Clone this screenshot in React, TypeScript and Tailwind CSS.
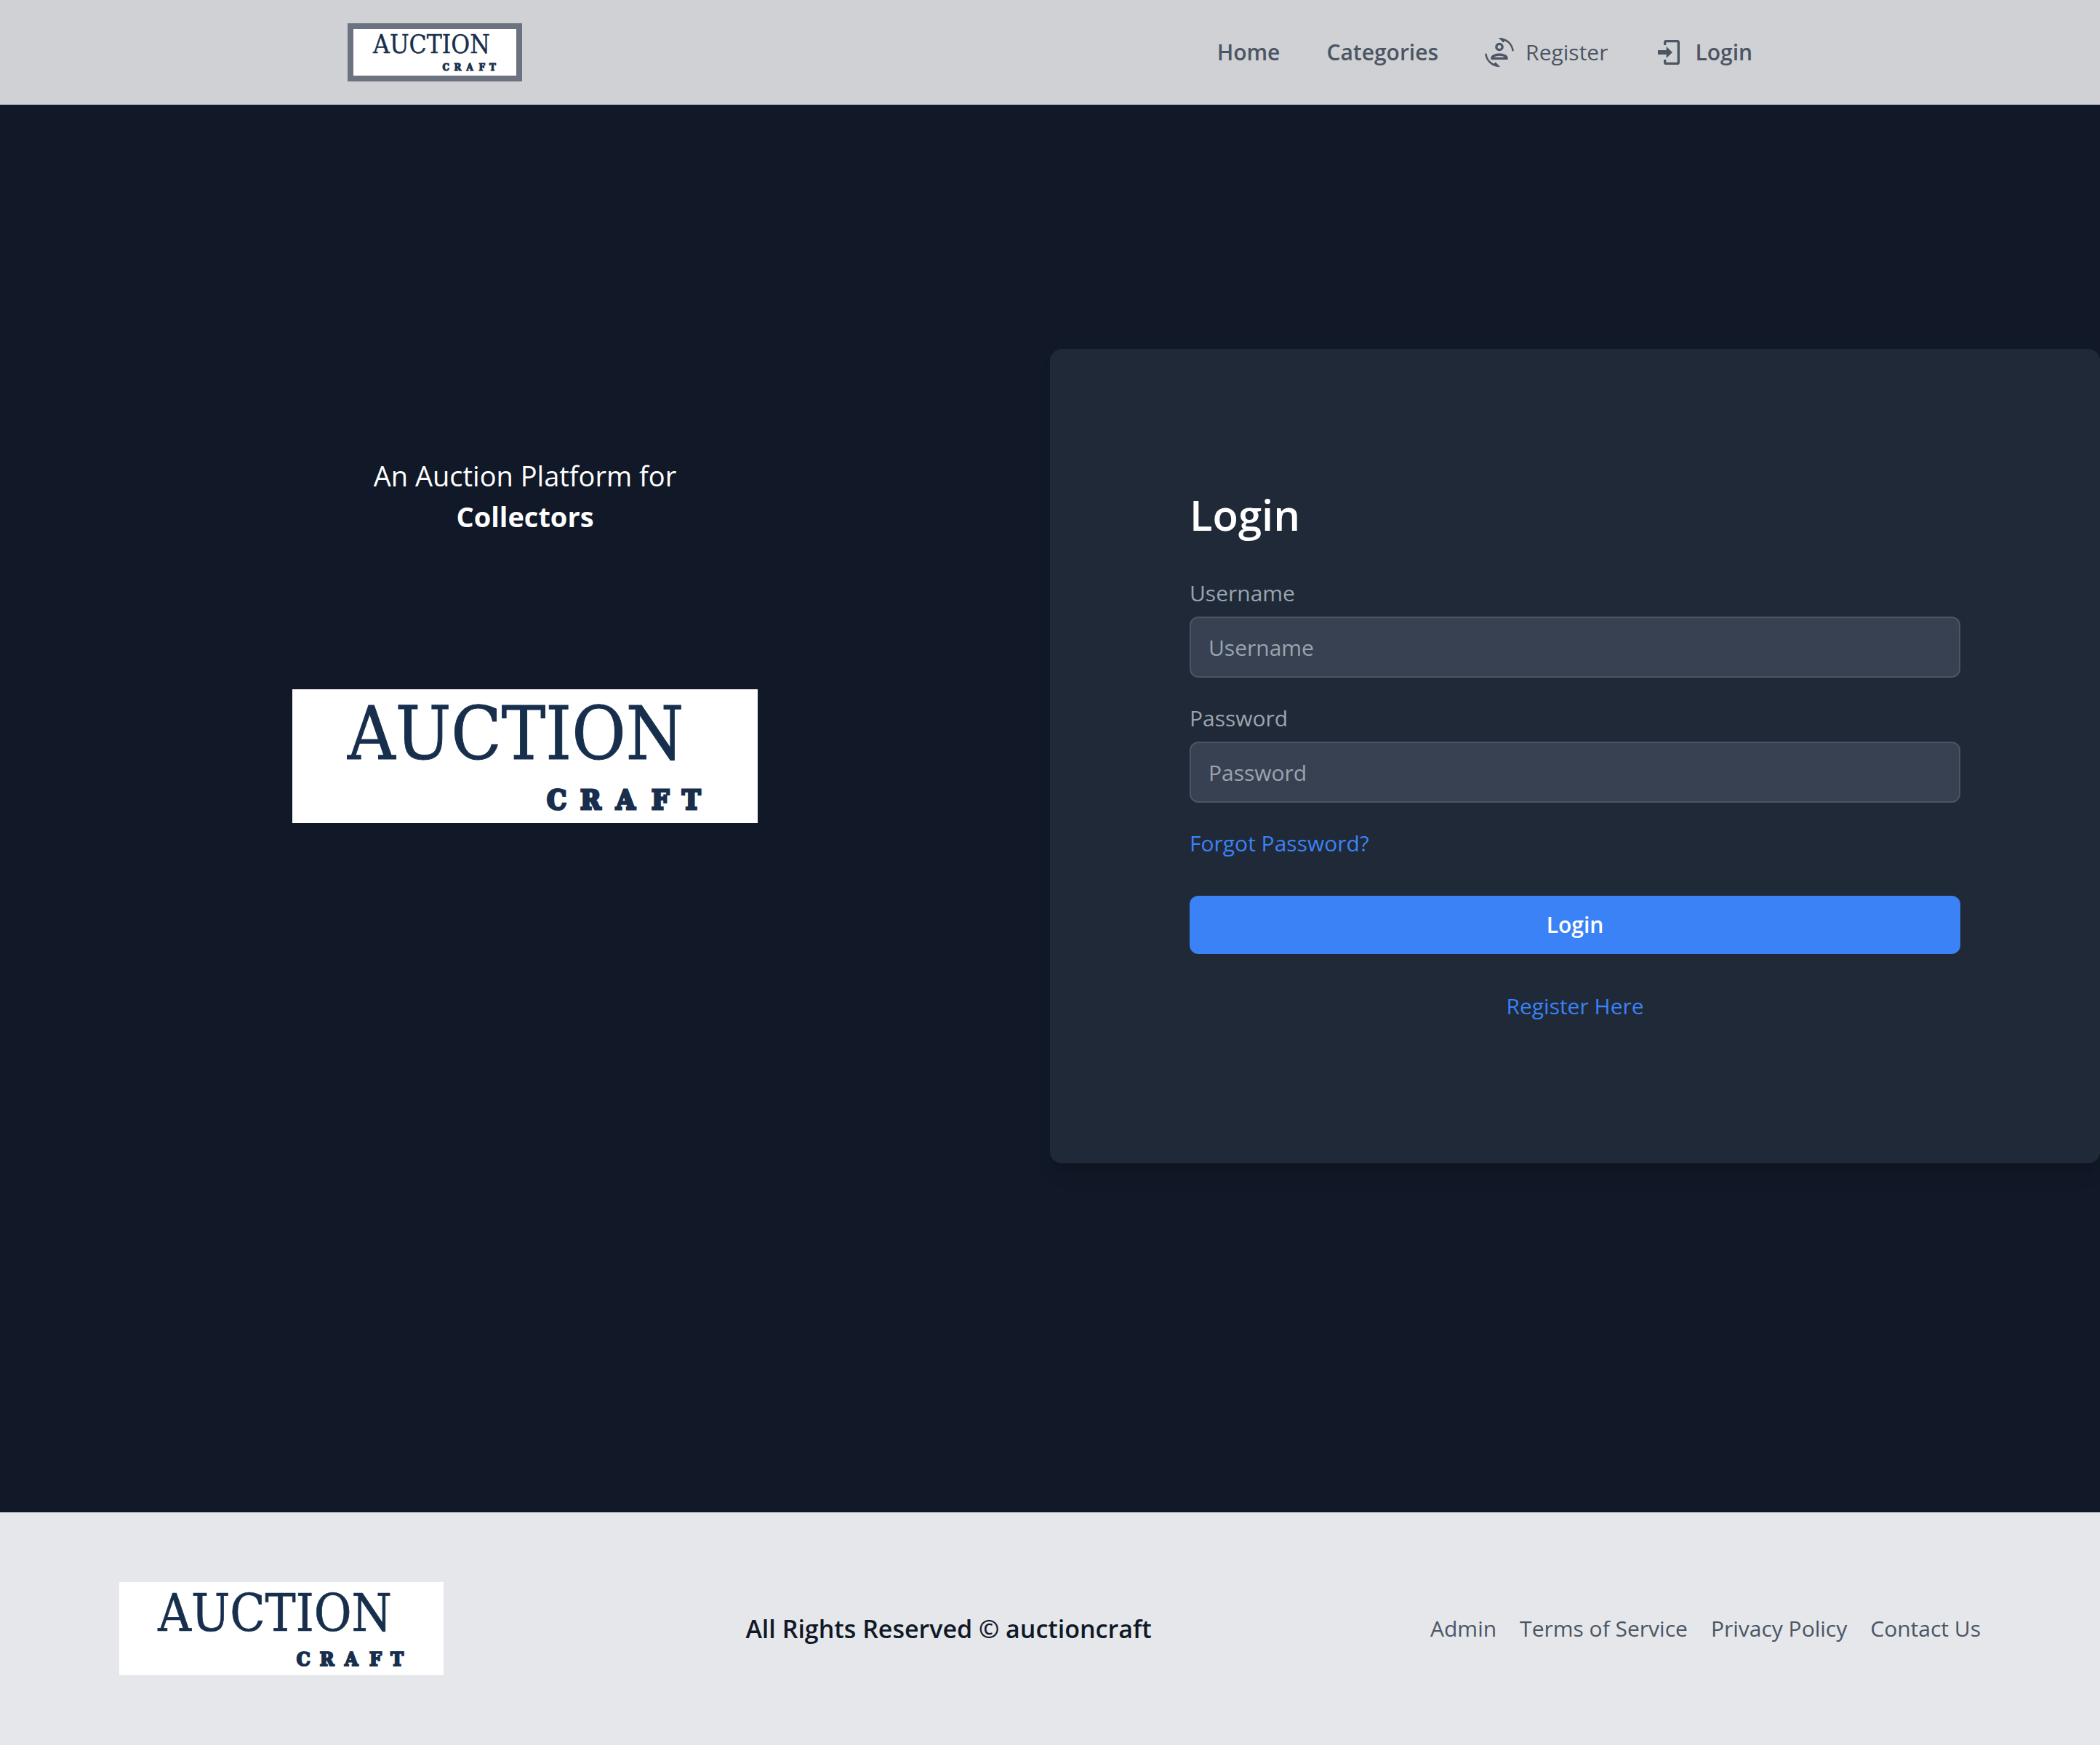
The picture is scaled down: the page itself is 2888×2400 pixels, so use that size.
import type { ReactNode } from "react";

function Logo({ className }: { className: string }) {
  return (
    <svg viewBox="0 0 640 184" role="img" aria-label="Auction Craft" className={className}>
      <rect width="640" height="184" fill="#ffffff" />
      <text
        x="76"
        y="96"
        fontSize="101"
        fill="#172f4d"
        stroke="#172f4d"
        strokeWidth="1"
        fontFamily="'DejaVu Serif Condensed', 'DejaVu Serif', serif"
      >
        AUCTION
      </text>
      <text
        x="350 396 445 494 536"
        y="165"
        fontSize="38"
        fontWeight="700"
        fill="#172f4d"
        stroke="#172f4d"
        strokeWidth="3"
        fontFamily="'DejaVu Serif Condensed', 'DejaVu Serif', serif"
      >
        CRAFT
      </text>
    </svg>
  );
}

function RegisterIcon() {
  return (
    <svg viewBox="0 0 24 24" fill="currentColor" aria-hidden="true" className="size-10">
      <path d="M7.52 21.48A10.49 10.49 0 0 1 1.55 13H.05C.56 19.16 5.71 24 12 24l.66-.03-3.81-3.81zM16.48 2.52A10.49 10.49 0 0 1 22.45 11h1.5C23.44 4.84 18.29 0 12 0l-.66.03 3.81 3.81z" />
      <circle cx="12" cy="7.5" r="2.5" fill="none" stroke="currentColor" strokeWidth="2" />
      <path
        fillRule="evenodd"
        d="M19 18H5v-1.5c0-2.5 4.2-3.6 7-3.6s7 1.1 7 3.6zM7.5 16h9c-.8-.7-2.9-1.2-4.5-1.2s-3.7.5-4.5 1.200z"
      />
    </svg>
  );
}

function LoginIcon() {
  return (
    <svg viewBox="0 0 24 24" fill="currentColor" aria-hidden="true" className="size-10">
      <path d="M3 10.2h7V7.2l5 4.8-5 4.800v-3H3z" />
      <path
        d="M8.8 6V3.8a1 1 0 0 1 1-1h9.2a1 1 0 0 1 1 1v16.400a1 1 0 0 1-1 1H9.8a1 1 0 0 1-1-1V18"
        fill="none"
        stroke="currentColor"
        strokeWidth="2"
      />
    </svg>
  );
}

function Field({ id, label, type }: { id: string; label: string; type: string }) {
  return (
    <div className="mb-8">
      <label htmlFor={id} className="mb-2 block text-[#9ca3af]">
        {label}
      </label>
      <input
        id={id}
        type={type}
        placeholder={label}
        className="block h-[84px] w-full rounded-xl border-2 border-[#4b5563] bg-[#374151] px-6 text-white placeholder:text-[#9ca3af]"
      />
    </div>
  );
}

function NavLink({ children, bold = true }: { children: ReactNode; bold?: boolean }) {
  return (
    <a href="#" className={bold ? "flex items-center gap-4 font-semibold" : "flex items-center gap-4"}>
      {children}
    </a>
  );
}

export default function App() {
  return (
    <div className="flex min-h-screen flex-col bg-[#111827] font-['Open_Sans','Noto_Sans',sans-serif] text-[30px] leading-[48px]">
      <header className="flex items-center justify-around bg-[#d0d1d5] py-8">
        <a href="#" className="border-8 border-[#6b7280]">
          <Logo className="block h-16 w-56 bg-white" />
        </a>
        <nav className="flex items-center gap-16 text-[#4b5563]">
          <NavLink>Home</NavLink>
          <NavLink>Categories</NavLink>
          <NavLink bold={false}>
            <RegisterIcon />
            Register
          </NavLink>
          <NavLink>
            <LoginIcon />
            Login
          </NavLink>
        </nav>
      </header>

      <main className="grid flex-1 grid-cols-2 items-center pb-36">
        <section className="grid grid-rows-[1fr_auto_1fr] justify-items-center self-stretch">
          <p className="mb-[210px] self-end text-center text-[38px] leading-[56px] text-white">
            An Auction Platform for
            <br />
            <strong className="font-bold">Collectors</strong>
          </p>
          <Logo className="w-[640px]" />
        </section>

        <section className="rounded-2xl bg-[#1f2937] p-48 shadow-xl">
          <h1 className="mb-12 text-[58px] leading-[72px] font-semibold text-white">Login</h1>
          <form>
            <Field id="username" label="Username" type="text" />
            <Field id="password" label="Password" type="password" />
            <a href="#" className="block w-fit text-[#3b82f6]">
              Forgot Password?
            </a>
            <button type="button" className="mt-12 block w-full rounded-xl bg-[#3b82f6] py-4 font-semibold text-white">
              Login
            </button>
          </form>
          <a href="#" className="mx-auto mt-12 block w-fit text-[#3b82f6]">
            Register Here
          </a>
        </section>
      </main>

      <footer className="flex items-center justify-between bg-[#e5e7eb] px-[164px] py-24">
        <Logo className="mr-8 h-32 w-[446px] bg-white" />
        <p className="text-[34px] font-semibold text-[#111827]">All Rights Reserved © auctioncraft</p>
        <nav className="flex gap-8 text-[#4b5563]">
          <a href="#">Admin</a>
          <a href="#">Terms of Service</a>
          <a href="#">Privacy Policy</a>
          <a href="#">Contact Us</a>
        </nav>
      </footer>
    </div>
  );
}
